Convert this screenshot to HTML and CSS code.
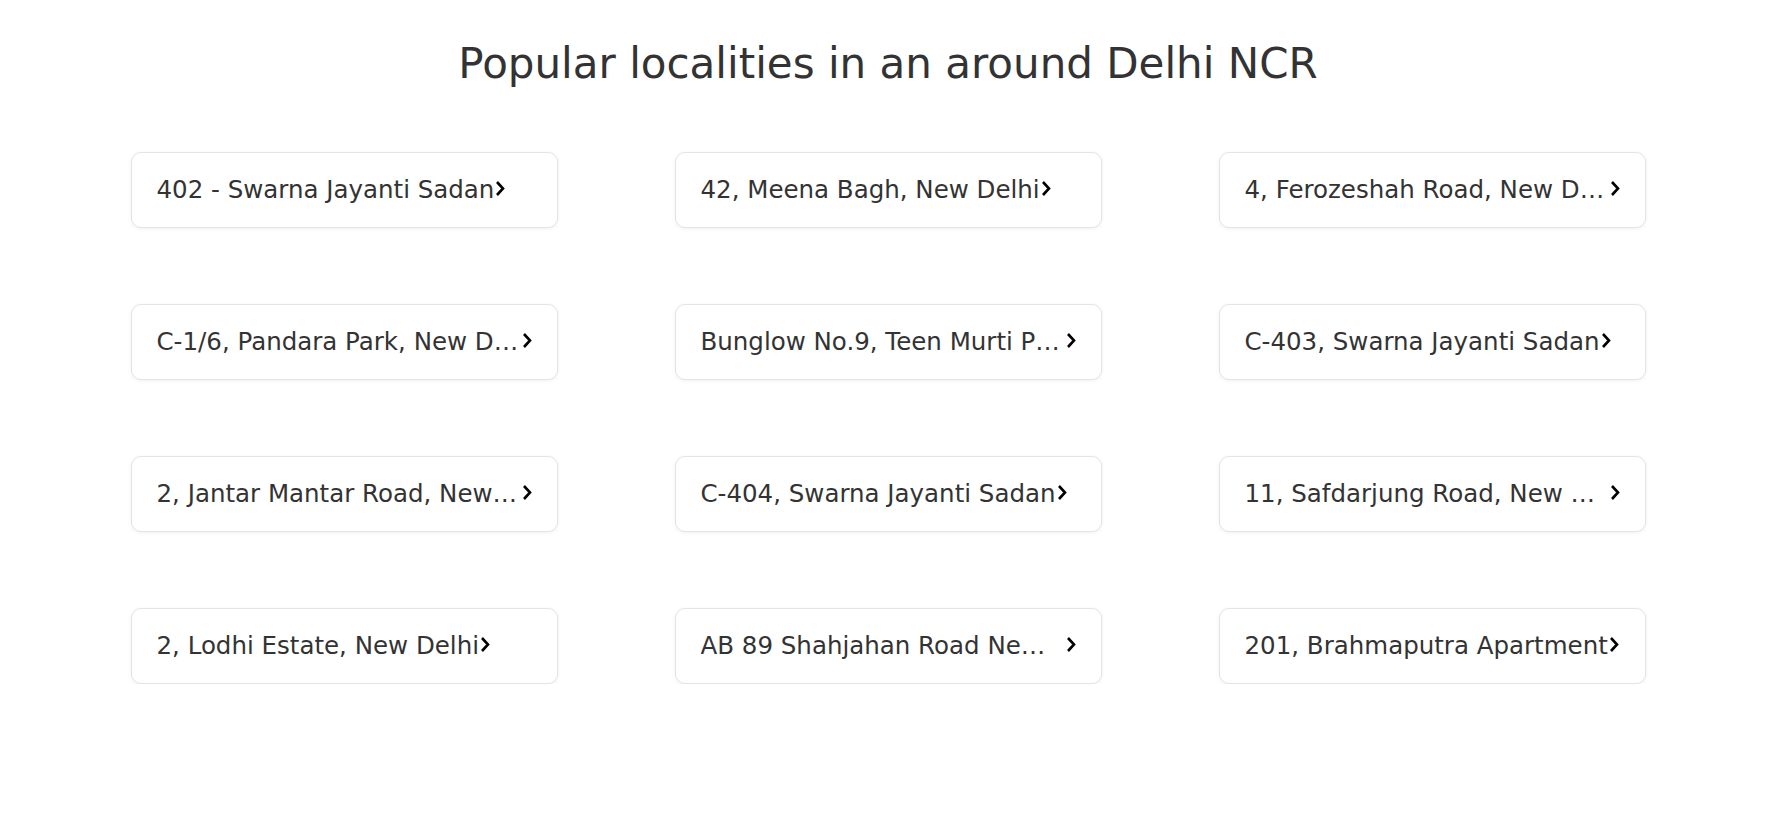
FILE: index.html
```html
<!DOCTYPE html>
<html>
<head>
<meta charset="utf-8">
<link rel="stylesheet" href="styles.css">
</head>
<body>
<section class="localities">
  <h1 class="title">Popular localities in an around Delhi NCR</h1>
  <div class="grid">
    <a class="card"><span class="label">402 - Swarna Jayanti Sadan</span><svg class="chev" viewBox="0 0 10 17"><path d="M2 2l6 6.5-6 6.5"/></svg></a>
    <a class="card"><span class="label">42, Meena Bagh, New Delhi</span><svg class="chev" viewBox="0 0 10 17"><path d="M2 2l6 6.5-6 6.5"/></svg></a>
    <a class="card"><span class="label">4, Ferozeshah Road, New Delhi</span><svg class="chev" viewBox="0 0 10 17"><path d="M2 2l6 6.5-6 6.5"/></svg></a>
    <a class="card"><span class="label">C-1/6, Pandara Park, New Delhi</span><svg class="chev" viewBox="0 0 10 17"><path d="M2 2l6 6.5-6 6.5"/></svg></a>
    <a class="card"><span class="label">Bunglow No.9, Teen Murti Place</span><svg class="chev" viewBox="0 0 10 17"><path d="M2 2l6 6.5-6 6.5"/></svg></a>
    <a class="card"><span class="label">C-403, Swarna Jayanti Sadan</span><svg class="chev" viewBox="0 0 10 17"><path d="M2 2l6 6.5-6 6.5"/></svg></a>
    <a class="card"><span class="label">2, Jantar Mantar Road, New Delhi</span><svg class="chev" viewBox="0 0 10 17"><path d="M2 2l6 6.5-6 6.5"/></svg></a>
    <a class="card"><span class="label">C-404, Swarna Jayanti Sadan</span><svg class="chev" viewBox="0 0 10 17"><path d="M2 2l6 6.5-6 6.5"/></svg></a>
    <a class="card"><span class="label">11, Safdarjung Road, New Delhi</span><svg class="chev" viewBox="0 0 10 17"><path d="M2 2l6 6.5-6 6.5"/></svg></a>
    <a class="card"><span class="label">2, Lodhi Estate, New Delhi</span><svg class="chev" viewBox="0 0 10 17"><path d="M2 2l6 6.5-6 6.5"/></svg></a>
    <a class="card"><span class="label">AB 89 Shahjahan Road New Delhi</span><svg class="chev" viewBox="0 0 10 17"><path d="M2 2l6 6.5-6 6.5"/></svg></a>
    <a class="card"><span class="label">201, Brahmaputra Apartment</span><svg class="chev" viewBox="0 0 10 17"><path d="M2 2l6 6.5-6 6.5"/></svg></a>
  </div>
</section>
</body>
</html>
```

FILE: styles.css
```css
html, body {
  margin: 0;
  padding: 0;
  background: #ffffff;
}

body {
  font-family: "DejaVu Sans", Verdana, sans-serif;
  color: #333333;
}

.localities {
  display: flex;
  flex-direction: column;
  align-items: center;
  padding-left: 8px;
}

.title {
  margin: 39px 0 0;
  font-size: 42px;
  line-height: 50px;
  font-weight: normal;
  color: #333333;
}

.grid {
  margin-top: 63px;
  display: grid;
  grid-template-columns: repeat(3, 427px);
  grid-auto-rows: 76px;
  column-gap: 117px;
  row-gap: 76px;
}

.card {
  display: flex;
  align-items: center;
  box-sizing: border-box;
  padding: 0 25px;
  border: 1px solid #e4e4e4;
  border-radius: 10px;
  box-shadow: 0 1px 4px rgba(0, 0, 0, 0.06);
  background: #fff;
  text-decoration: none;
  color: #333333;
}

.label {
  font-size: 24.5px;
  line-height: 30px;
  white-space: nowrap;
  overflow: hidden;
  text-overflow: ellipsis;
  max-width: 368px;
}

.chev {
  width: 10px;
  height: 17px;
  flex: none;
  margin-top: -4px;
  margin-left: 1px;
}

.chev path {
  fill: none;
  stroke: #000;
  stroke-width: 2.6;
}
```
